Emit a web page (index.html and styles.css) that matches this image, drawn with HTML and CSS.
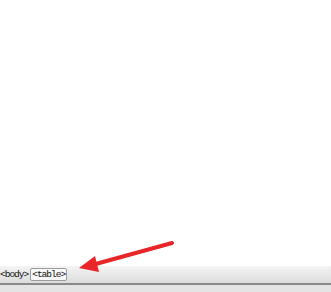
FILE: index.html
```html
<!DOCTYPE html>
<html lang="en">
<head>
    <meta charset="UTF-8">
    <title>Tag selector</title>
    <link rel="stylesheet" href="styles.css">
</head>
<body>
    <div class="page">
        <div class="doc"></div>
        <div class="status-bar">
            <span class="tag">&lt;body&gt;</span>
            <span class="tag tag-active">&lt;table&gt;</span>
        </div>
        <div class="status-foot"></div>
    </div>
    <svg class="arrow" width="331" height="292" viewBox="0 0 331 292">
        <line x1="172" y1="243" x2="92" y2="265" stroke="#e8262a" stroke-width="4" stroke-linecap="round"/>
        <polygon points="79,268 95,256 99,272" fill="#e8262a"/>
    </svg>
</body>
</html>
```
FILE: styles.css
```css
body { margin: 0; background: #fff; font-family: "Liberation Mono", monospace; }
.page { height: 292px; display: flex; flex-direction: column; }
.doc { flex: 1; background: #fff; }
.status-bar { height: 17px; display: flex; align-items: center; gap: 1px; background: linear-gradient(#f4f4f4, #dcdcdc); font-size: 9.5px; letter-spacing: -1px; color: #111; }
.tag { padding: 0 1px 0 0; }
.tag-active { padding: 0 1px; border: 1px solid #9a9a9a; background: #f8f8f8; border-radius: 2px; line-height: 11px; }
.status-foot { height: 7px; border-top: 2px solid #8a8a8a; background: #e4e4e4; }
.arrow { position: absolute; left: 0; top: 0; pointer-events: none; }
```
